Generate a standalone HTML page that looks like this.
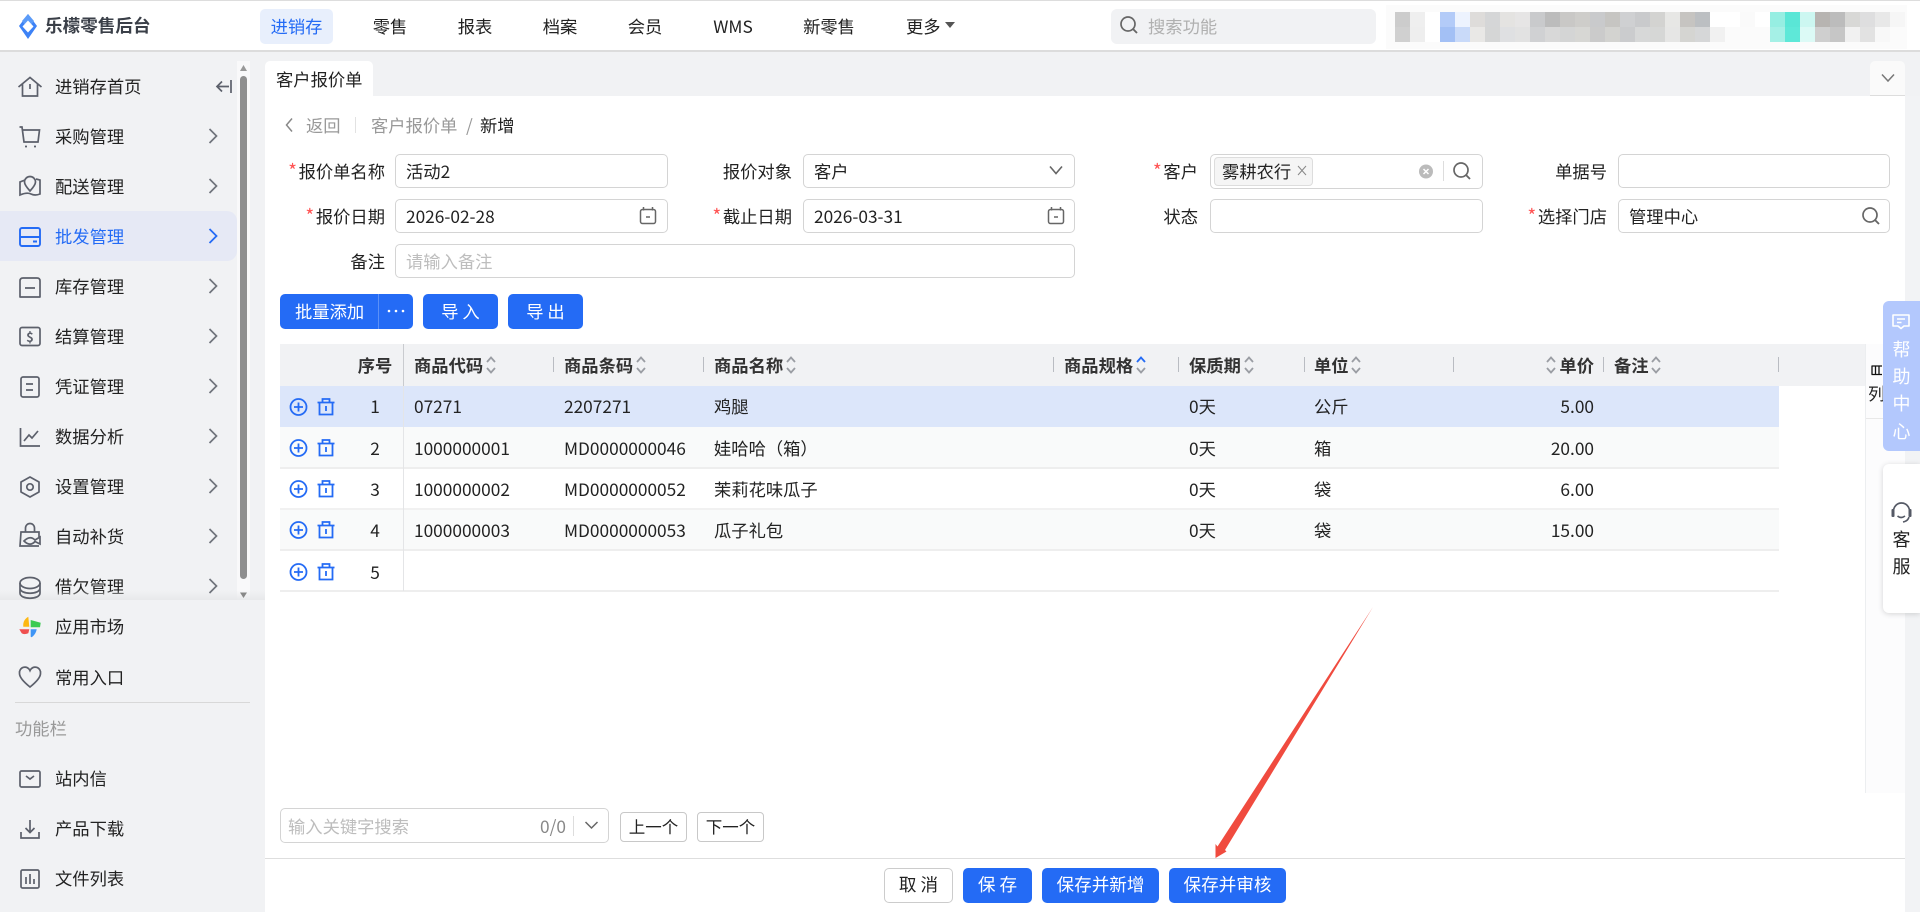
<!DOCTYPE html>
<html lang="zh-CN"><head><meta charset="utf-8"><title>客户报价单</title>
<style>
html,body{margin:0;padding:0;width:1920px;height:912px;overflow:hidden;background:#f1f2f4}
body{font-family:"Noto Sans CJK SC","Liberation Sans",sans-serif;font-size:17.3px;color:#222;position:relative}
.b,.t{position:absolute;box-sizing:border-box}
.t{white-space:nowrap;line-height:24px;height:24px}
.r{text-align:right}
.c{text-align:center}
.in{position:absolute;box-sizing:border-box;height:34px;background:#fff;border:1.5px solid #d4d4d4;border-radius:5px}
.btn{position:absolute;box-sizing:border-box;height:35px;line-height:34px;background:#246bf5;color:#fff;border-radius:5px;text-align:center;white-space:nowrap}
.h{font-weight:700;color:#333}
.g{color:#999}
.ph{color:#bdbdbd}
.red{color:#f55;display:inline-block;width:10.5px;text-align:left;font-size:19px;line-height:20px}
.dv{position:absolute;width:1px;height:15px;top:357px;background:#b9bcc2}
.row{position:absolute;left:280px;width:1499px;height:42px}
.hp{font-size:18px}
</style></head><body>
<!-- top bar -->
<div class="b" style="left:0;top:0;width:1920px;height:52px;background:#fff;border-top:1px solid #ddd;border-bottom:2px solid #dcdcdc"></div>
<div class="t" style="left:45px;top:14px;font-weight:700;font-size:17.6px;color:#3a3f48">乐檬零售后台</div>
<div class="b" style="left:260px;top:9px;width:73px;height:35px;background:#e8effc;border-radius:5px"></div>
<div class="t c" style="left:260px;top:14px;width:73px;color:#246bf5">进销存</div>
<div class="t c" style="left:350px;top:14px;width:80px">零售</div>
<div class="t c" style="left:435px;top:14px;width:80px">报表</div>
<div class="t c" style="left:520px;top:14px;width:80px">档案</div>
<div class="t c" style="left:605px;top:14px;width:80px">会员</div>
<div class="t c" style="left:693px;top:14px;width:80px">WMS</div>
<div class="t c" style="left:789px;top:14px;width:80px">新零售</div>
<div class="t" style="left:906px;top:14px">更多</div>
<div class="b" style="left:1111px;top:9px;width:265px;height:35px;background:#f1f2f4;border-radius:6px"></div>
<div class="t ph" style="left:1148px;top:14px;color:#b0b0b0">搜索功能</div>
<svg class="b" style="left:1386px;top:4px" width="521" height="46" viewBox="1386 4 521 46" shape-rendering="crispEdges">
<rect x="1386" y="5" width="521" height="44" fill="#fbfbfb"/>
<g id="m">
<rect x="1395" y="12" width="15" height="15" fill="#ccc"/><rect x="1410" y="12" width="15" height="15" fill="#efefef"/><rect x="1425" y="12" width="15" height="15" fill="#fff"/><rect x="1440" y="12" width="15" height="15" fill="#b3cbf8"/><rect x="1455" y="12" width="15" height="15" fill="#edf3fe"/><rect x="1470" y="12" width="15" height="15" fill="#dedcda"/><rect x="1485" y="12" width="15" height="15" fill="#d5d6d7"/><rect x="1500" y="12" width="15" height="15" fill="#e4e3e1"/><rect x="1515" y="12" width="15" height="15" fill="#e6e5e5"/><rect x="1530" y="12" width="15" height="15" fill="#c9cacc"/><rect x="1545" y="12" width="15" height="15" fill="#bcbcbc"/><rect x="1560" y="12" width="15" height="15" fill="#c9c8c6"/><rect x="1575" y="12" width="15" height="15" fill="#cecdca"/><rect x="1590" y="12" width="15" height="15" fill="#c9cacc"/><rect x="1605" y="12" width="15" height="15" fill="#c6c5c2"/><rect x="1620" y="12" width="15" height="15" fill="#cfd0d2"/><rect x="1635" y="12" width="15" height="15" fill="#c9cacc"/><rect x="1650" y="12" width="15" height="15" fill="#d3d3d1"/><rect x="1665" y="12" width="15" height="15" fill="#e7e7e5"/><rect x="1680" y="12" width="15" height="15" fill="#c6c4c1"/><rect x="1695" y="12" width="15" height="15" fill="#bcbfc2"/><rect x="1710" y="12" width="30" height="15" fill="#fff"/><rect x="1740" y="12" width="15" height="15" fill="#fafafa"/><rect x="1755" y="12" width="15" height="15" fill="#fff"/>
<rect x="1770" y="12" width="15" height="15" fill="#96eee2"/><rect x="1785" y="12" width="15" height="15" fill="#5ae6d6"/><rect x="1800" y="12" width="15" height="15" fill="#ccf7f1"/><rect x="1815" y="12" width="15" height="15" fill="#b7b4b1"/><rect x="1830" y="12" width="15" height="15" fill="#bcbcbc"/><rect x="1845" y="12" width="15" height="15" fill="#d8d8d6"/><rect x="1860" y="12" width="15" height="15" fill="#dededf"/><rect x="1875" y="12" width="15" height="15" fill="#e8e8e8"/><rect x="1890" y="12" width="15" height="15" fill="#f6f6f6"/>
<rect x="1395" y="27" width="15" height="15" fill="#d0d0d0"/><rect x="1410" y="27" width="15" height="15" fill="#eee"/><rect x="1425" y="27" width="15" height="15" fill="#fff"/><rect x="1440" y="27" width="15" height="15" fill="#a3c0f5"/><rect x="1455" y="27" width="15" height="15" fill="#c9daf9"/><rect x="1470" y="27" width="15" height="15" fill="#e9e8e6"/><rect x="1485" y="27" width="15" height="15" fill="#d5d6d6"/><rect x="1500" y="27" width="15" height="15" fill="#dfe0e2"/><rect x="1515" y="27" width="15" height="15" fill="#e2e2e2"/><rect x="1530" y="27" width="15" height="15" fill="#d0d1d3"/><rect x="1545" y="27" width="15" height="15" fill="#d8d8d8"/><rect x="1560" y="27" width="15" height="15" fill="#d4d5d5"/><rect x="1575" y="27" width="15" height="15" fill="#d7d7d4"/><rect x="1590" y="27" width="15" height="15" fill="#cbcbcb"/><rect x="1605" y="27" width="15" height="15" fill="#d3d3d0"/><rect x="1620" y="27" width="15" height="15" fill="#cbccce"/><rect x="1635" y="27" width="15" height="15" fill="#d7d8d8"/><rect x="1650" y="27" width="15" height="15" fill="#d6d7d6"/><rect x="1665" y="27" width="15" height="15" fill="#e6e6e5"/><rect x="1680" y="27" width="15" height="15" fill="#d5d5d2"/><rect x="1695" y="27" width="15" height="15" fill="#d6d7d8"/><rect x="1710" y="27" width="15" height="15" fill="#f1f1f1"/>
<rect x="1770" y="27" width="15" height="15" fill="#a5f0e6"/><rect x="1785" y="27" width="15" height="15" fill="#5ee8d8"/><rect x="1800" y="27" width="15" height="15" fill="#dcfaf6"/><rect x="1815" y="27" width="15" height="15" fill="#cfcfcf"/><rect x="1830" y="27" width="15" height="15" fill="#c6c6c6"/><rect x="1845" y="27" width="15" height="15" fill="#f1f1f1"/><rect x="1860" y="27" width="15" height="15" fill="#e2e2e2"/><rect x="1875" y="27" width="15" height="15" fill="#f8f8f8"/>
</g></svg>

<!-- sidebar -->
<div class="b" style="left:237px;top:61px;width:13px;height:539px;background:#f9f9fa"></div>
<div class="b" style="left:240px;top:76px;width:7px;height:503px;background:#8f8f8f;border-radius:4px"></div>
<div class="b" style="left:0;top:211px;width:237px;height:50px;background:#e6e9f5;border-radius:0 10px 10px 0"></div>
<div class="t" style="left:55px;top:74px">进销存首页</div>
<div class="t" style="left:55px;top:124px">采购管理</div>
<div class="t" style="left:55px;top:174px">配送管理</div>
<div class="t" style="left:55px;top:224px;color:#246bf5">批发管理</div>
<div class="t" style="left:55px;top:274px">库存管理</div>
<div class="t" style="left:55px;top:324px">结算管理</div>
<div class="t" style="left:55px;top:374px">凭证管理</div>
<div class="t" style="left:55px;top:424px">数据分析</div>
<div class="t" style="left:55px;top:474px">设置管理</div>
<div class="t" style="left:55px;top:524px">自动补货</div>
<div class="t" style="left:55px;top:574px">借欠管理</div>
<div class="b" style="left:0;top:590px;width:265px;height:10px;background:linear-gradient(rgba(230,231,233,0),#e8e9eb)"></div>
<div class="b" style="left:0;top:600px;width:265px;height:312px;background:#f1f2f4"></div>
<div class="t" style="left:55px;top:614px">应用市场</div>
<div class="t" style="left:55px;top:665px">常用入口</div>
<div class="b" style="left:15px;top:702px;width:235px;height:1px;background:#d8d8d8"></div>
<div class="t" style="left:15px;top:716px;color:#999">功能栏</div>
<div class="t" style="left:55px;top:766px">站内信</div>
<div class="t" style="left:55px;top:816px">产品下载</div>
<div class="t" style="left:55px;top:866px">文件列表</div>

<!-- content -->
<div class="b" style="left:265px;top:96px;width:1640px;height:816px;background:#fff"></div>
<div class="b" style="left:265px;top:61px;width:108px;height:36px;background:#fff;border-radius:5px 5px 0 0"></div>
<div class="t" style="left:276px;top:67px">客户报价单</div>
<div class="b" style="left:1870px;top:61px;width:35px;height:35px;background:#fafafa;border-radius:5px 5px 0 0;border-bottom:1px solid #ddd"></div>

<div class="t g" style="left:306px;top:113px">返回</div>
<div class="b" style="left:355px;top:117px;width:1px;height:16px;background:#e2e2e2"></div>
<div class="t g" style="left:371px;top:113px">客户报价单</div>
<div class="t g" style="left:466px;top:113px">/</div>
<div class="t" style="left:480px;top:113px">新增</div>

<!-- form -->
<div class="t r" style="left:225px;width:160px;top:159px"><span class="red">*</span>报价单名称</div>
<div class="in" style="left:395px;top:154px;width:273px"></div>
<div class="t" style="left:406px;top:159px">活动2</div>
<div class="t r" style="left:632px;width:160px;top:159px">报价对象</div>
<div class="in" style="left:803px;top:154px;width:272px"></div>
<div class="t" style="left:814px;top:159px">客户</div>
<div class="t r" style="left:1038px;width:160px;top:159px"><span class="red">*</span>客户</div>
<div class="in" style="left:1210px;top:154px;width:273px;height:35px"></div>
<div class="b" style="left:1214px;top:157px;width:99px;height:29px;background:#f5f5f5;border:1px solid #ddd;border-radius:4px"></div>
<div class="t" style="left:1222px;top:159px">雾耕农行</div>
<div class="t r" style="left:1447px;width:160px;top:159px">单据号</div>
<div class="in" style="left:1618px;top:154px;width:272px"></div>

<div class="t r" style="left:225px;width:160px;top:204px"><span class="red">*</span>报价日期</div>
<div class="in" style="left:395px;top:199px;width:273px"></div>
<div class="t" style="left:406px;top:204px">2026-02-28</div>
<div class="t r" style="left:632px;width:160px;top:204px"><span class="red">*</span>截止日期</div>
<div class="in" style="left:803px;top:199px;width:272px"></div>
<div class="t" style="left:814px;top:204px">2026-03-31</div>
<div class="t r" style="left:1038px;width:160px;top:204px">状态</div>
<div class="in" style="left:1210px;top:199px;width:273px"></div>
<div class="t r" style="left:1447px;width:160px;top:204px"><span class="red">*</span>选择门店</div>
<div class="in" style="left:1618px;top:199px;width:272px"></div>
<div class="t" style="left:1629px;top:204px">管理中心</div>

<div class="t r" style="left:225px;width:160px;top:249px">备注</div>
<div class="in" style="left:395px;top:244px;width:680px"></div>
<div class="t ph" style="left:406px;top:249px">请输入备注</div>

<!-- toolbar -->
<div class="btn" style="left:280px;top:294px;width:133px;text-align:left;padding-left:15px">批量添加</div>
<div class="b" style="left:378px;top:294px;width:1px;height:35px;background:#5b90f7"></div>
<div class="btn" style="left:423px;top:294px;width:75px">导 入</div>
<div class="btn" style="left:508px;top:294px;width:75px">导 出</div>

<!-- table -->
<div class="b" style="left:280px;top:344px;width:1585px;height:42px;background:#f1f2f4"></div>
<div class="row" style="top:386px;height:41px;background:#dce6fa"></div>
<div class="row" style="top:427px;background:#f9fafa;border-bottom:2px solid #eeeeee;box-sizing:border-box"></div>
<div class="row" style="top:469px;height:41px;background:#fff;border-bottom:2px solid #f1f1f1;box-sizing:border-box"></div>
<div class="row" style="top:510px;height:41px;background:#f9fafa;border-bottom:2px solid #eeeeee;box-sizing:border-box"></div>
<div class="row" style="top:551px;height:41px;background:#fff;border-bottom:2px solid #eeeeee;box-sizing:border-box"></div>
<div class="b" style="left:403px;top:344px;width:1px;height:247px;background:#e4e5e7"></div>
<div class="b" style="left:403px;top:344px;width:1px;height:42px;background:#c9cbcf"></div>
<div class="dv" style="left:553px"></div><div class="dv" style="left:703px"></div><div class="dv" style="left:1053px"></div><div class="dv" style="left:1178px"></div><div class="dv" style="left:1304px"></div><div class="dv" style="left:1453px"></div><div class="dv" style="left:1603px"></div><div class="dv" style="left:1778px"></div>

<div class="t h c" style="left:345px;width:60px;top:353px">序号</div>
<div class="t h" style="left:414px;top:353px">商品代码</div>
<div class="t h" style="left:564px;top:353px">商品条码</div>
<div class="t h" style="left:714px;top:353px">商品名称</div>
<div class="t h" style="left:1064px;top:353px">商品规格</div>
<div class="t h" style="left:1189px;top:353px">保质期</div>
<div class="t h" style="left:1314px;top:353px">单位</div>
<div class="t h r" style="left:1494px;width:100px;top:353px">单价</div>
<div class="t h" style="left:1614px;top:353px">备注</div>

<div class="t c" style="left:345px;width:60px;top:394px">1</div>
<div class="t" style="left:414px;top:394px">07271</div>
<div class="t" style="left:564px;top:394px">2207271</div>
<div class="t" style="left:714px;top:394px">鸡腿</div>
<div class="t" style="left:1189px;top:394px">0天</div>
<div class="t" style="left:1314px;top:394px">公斤</div>
<div class="t r" style="left:1494px;width:100px;top:394px">5.00</div>

<div class="t c" style="left:345px;width:60px;top:436px">2</div>
<div class="t" style="left:414px;top:436px">1000000001</div>
<div class="t" style="left:564px;top:436px">MD0000000046</div>
<div class="t" style="left:714px;top:436px">娃哈哈（箱）</div>
<div class="t" style="left:1189px;top:436px">0天</div>
<div class="t" style="left:1314px;top:436px">箱</div>
<div class="t r" style="left:1494px;width:100px;top:436px">20.00</div>

<div class="t c" style="left:345px;width:60px;top:477px">3</div>
<div class="t" style="left:414px;top:477px">1000000002</div>
<div class="t" style="left:564px;top:477px">MD0000000052</div>
<div class="t" style="left:714px;top:477px">茉莉花味瓜子</div>
<div class="t" style="left:1189px;top:477px">0天</div>
<div class="t" style="left:1314px;top:477px">袋</div>
<div class="t r" style="left:1494px;width:100px;top:477px">6.00</div>

<div class="t c" style="left:345px;width:60px;top:518px">4</div>
<div class="t" style="left:414px;top:518px">1000000003</div>
<div class="t" style="left:564px;top:518px">MD0000000053</div>
<div class="t" style="left:714px;top:518px">瓜子礼包</div>
<div class="t" style="left:1189px;top:518px">0天</div>
<div class="t" style="left:1314px;top:518px">袋</div>
<div class="t r" style="left:1494px;width:100px;top:518px">15.00</div>

<div class="t c" style="left:345px;width:60px;top:560px">5</div>

<!-- column setting strip -->
<div class="b" style="left:1865px;top:344px;width:40px;height:449px;background:#fcfcfd;border-left:1px solid #eceef0"></div>
<div class="b" style="left:1866px;top:418px;width:39px;height:1px;background:#e8e8e8"></div>
<div class="t" style="left:1868px;top:381px">列</div>
<div class="b" style="left:1905px;top:96px;width:15px;height:816px;background:#f2f3f5"></div>

<!-- help -->
<div class="b" style="left:1883px;top:301px;width:37px;height:150px;background:#b3c8fd;border-radius:6px 0 0 6px"></div>
<div class="t c hp" style="left:1883px;width:37px;top:337px;color:#fff">帮</div>
<div class="t c hp" style="left:1883px;width:37px;top:364px;color:#fff">助</div>
<div class="t c hp" style="left:1883px;width:37px;top:391px;color:#fff">中</div>
<div class="t c hp" style="left:1883px;width:37px;top:419px;color:#fff">心</div>
<div class="b" style="left:1883px;top:464px;width:37px;height:149px;background:#fff;border-radius:6px 0 0 6px;box-shadow:0 1px 6px rgba(0,0,0,.16)"></div>
<div class="t c hp" style="left:1883px;width:37px;top:527px">客</div>
<div class="t c hp" style="left:1883px;width:37px;top:554px">服</div>

<!-- bottom search -->
<div class="in" style="left:280px;top:808px;width:329px;height:35px"></div>
<div class="t ph" style="left:288px;top:814px">输入关键字搜索</div>
<div class="t" style="left:540px;top:814px;color:#888">0/0</div>
<div class="b" style="left:573px;top:816px;width:1px;height:20px;background:#ddd"></div>
<div class="b c" style="left:620px;top:812px;width:67px;height:30px;border:1.5px solid #c8c8c8;border-radius:4px;line-height:27px;font-size:16.5px">上一个</div>
<div class="b c" style="left:697px;top:812px;width:67px;height:30px;border:1.5px solid #c8c8c8;border-radius:4px;line-height:27px;font-size:16.5px">下一个</div>

<!-- footer -->
<div class="b" style="left:265px;top:858px;width:1640px;height:1px;background:#dedede"></div>
<div class="btn" style="left:884px;top:868px;width:69px;background:#fff;color:#222;border:1.5px solid #ccc;line-height:32px;font-size:17.6px">取 消</div>
<div class="btn" style="left:963px;top:868px;width:69px;font-size:17.6px">保 存</div>
<div class="btn" style="left:1042px;top:868px;width:117px;font-size:17.6px">保存并新增</div>
<div class="btn" style="left:1169px;top:868px;width:117px;font-size:17.6px">保存并审核</div>

<!-- icons overlay -->
<svg class="b" style="left:0;top:0" width="1920" height="912" viewBox="0 0 1920 912" fill="none">
<defs>
<g id="ch"><path d="M-3.5 -7L3.5 0L-3.5 7" stroke="#70747c" stroke-width="1.7"/></g>
<g id="so"><path d="M-4 -3L0 -7.5L4 -3" stroke="#9a9da3" stroke-width="1.8"/><path d="M-4 3L0 7.5L4 3" stroke="#9a9da3" stroke-width="1.8"/></g>
<g id="ac" stroke="#246bf5" stroke-width="1.8"><circle cx="298.5" cy="0" r="8"/><path d="M294 0H303M298.5 -4.5V4.5"/><path d="M317.5 -4.5H334.5M322.5 -4.5V-8H329.5V-4.5M319.5 -4.5V7.5H332.5V-4.5M326 -1V4"/></g>
<g id="mag"><circle cx="-1" cy="-1" r="7" stroke="#666" stroke-width="1.7"/><path d="M4 4L8 8" stroke="#666" stroke-width="1.9"/></g>
<g id="cal" stroke="#666" stroke-width="1.5"><rect x="-7.5" y="-6.5" width="15" height="14" rx="2"/><path d="M-4.5 -9V-5.5M4.5 -9V-5.5M-2 1H2"/></g>
</defs>

<!-- logo -->
<path d="M28 14L37 26L28 39L19 26Z" fill="#3d82f6"/>
<path d="M28 14L34 21L28 29L22 21Z" fill="#5b9bf8"/>
<path d="M28 20.5L33.5 26.5L28 32.5L22.5 26.5Z" fill="#fff"/>
<!-- more caret, search -->
<path d="M945 22H955L950 28Z" fill="#555"/>
<g transform="translate(1129,25)"><use href="#mag"/></g>

<!-- sidebar icons -->
<g stroke="#5c606b" stroke-width="1.7">
<path d="M18.5 87L30 77.5L41.5 87M22.5 84V96H37.5V84M30 84V89"/>
<path d="M19.5 127H22L24 142H38L39.5 130H23"/><path d="M25 146.5h2M34 146.5h2"/>
<path d="M25 180L20 182V195Q27 192 31 194Q35 196 40 194V180L36 179M30 176.5A5.5 5.5 0 0 1 35.5 182Q35.5 185 30 191Q24.5 185 24.5 182A5.5 5.5 0 0 1 30 176.5Z"/>
<path d="M23 278H37Q40 278 40 281V297H20V281Q20 278 23 278ZM25 288H35" stroke-linejoin="round"/>
<rect x="20" y="327.5" width="20" height="18" rx="2"/>
<rect x="21" y="377" width="18" height="20" rx="2"/><path d="M26 384H33M26 390H33"/>
<path d="M20.5 428V446H40M24 441L29 435L32 438L38 431"/>
<path d="M30 477L39 482V492L30 497L21 492V482Z" stroke-linejoin="round"/><circle cx="30" cy="487" r="3.2"/>
<path d="M39 537V532H21L20 546H39M25.5 532V528A4.5 4.5 0 0 1 34.5 528V532M24 541Q30 535 35 540L40 537V544L35 541.5Q30 547 24 541Z"/>
<ellipse cx="30" cy="583" rx="10" ry="5.5"/><path d="M20 583V593C20 600 40 600 40 593V583M20 588C20 595 40 595 40 588"/>
<path d="M30 687C25 683 19.5 678 19.5 673.5A5.5 5.5 0 0 1 30 670.5A5.5 5.5 0 0 1 40.5 673.5C40.5 678 35 683 30 687Z"/>
<rect x="20" y="771" width="20" height="16" rx="1.5"/><path d="M26 776L30 779L34 776"/>
<path d="M30 820V832M25.5 828L30 832.5L34.5 828M21 832V838H39V832"/>
<rect x="21" y="870" width="18" height="18" rx="1.5"/><path d="M26 877V884M30 874V884M34 879V884"/>
<!-- collapse -->
<path d="M231 80V93M217 86.5H229M222 81.5L217 86.5L222 91.5"/>
</g>
<text x="30" y="342" font-family="Noto Sans CJK SC,sans-serif" font-size="13" font-weight="700" fill="#5c606b" text-anchor="middle">$</text>
<!-- active wholesale -->
<g stroke="#246bf5" stroke-width="1.9"><rect x="20" y="228" width="20" height="18" rx="2"/><path d="M20 237H40M33 241.5H37"/></g>
<!-- app market -->
<path d="M28.3 616.7Q22.5 620 23.3 626.7L29.3 626.7Z" fill="#fdb813"/>
<path d="M30.7 620L40.7 622.7L40 627.3H30.7Z" fill="#3ccb52"/>
<path d="M30.7 629.3H36.7Q36 634 31.7 637.3L30.7 636.7Z" fill="#3f95f5"/>
<path d="M19.3 629.3H29.3L28.3 633.3Q24 635 21.7 633.3Z" fill="#ef4f4f"/>
<!-- sidebar chevrons -->
<use href="#ch" x="213" y="136"/><use href="#ch" x="213" y="186"/>
<g transform="translate(213,236)"><path d="M-3.5 -7L3.5 0L-3.5 7" stroke="#246bf5" stroke-width="1.8"/></g>
<use href="#ch" x="213" y="286"/><use href="#ch" x="213" y="336"/><use href="#ch" x="213" y="386"/><use href="#ch" x="213" y="436"/><use href="#ch" x="213" y="486"/><use href="#ch" x="213" y="536"/><use href="#ch" x="213" y="586"/>
<!-- scrollbar arrows -->
<path d="M243.5 65L240 71H247Z" fill="#999"/><path d="M243.5 598L240 592.5H247Z" fill="#888"/>

<!-- tab dropdown -->
<path d="M1882 74.5L1888 81L1894 74.5" stroke="#777" stroke-width="1.5"/>
<!-- breadcrumb back -->
<path d="M292 118.5L286.5 125L292 131.5" stroke="#888" stroke-width="1.5"/>

<!-- form icons -->
<g transform="translate(1056,170.5)"><path d="M-6 -4L0 3L6 -4" stroke="#666" stroke-width="1.6"/></g>
<use href="#cal" x="648" y="216"/>
<use href="#cal" x="1056" y="216"/>
<path d="M1298 166L1306 175M1306 166L1298 175" stroke="#888" stroke-width="1"/>
<circle cx="1426" cy="171.5" r="7" fill="#bbb"/><path d="M1423.5 169L1428.5 174M1428.5 169L1423.5 174" stroke="#fff" stroke-width="1.5"/>
<path d="M1443.5 161V181" stroke="#ddd"/>
<use href="#mag" x="1462" y="171"/>
<use href="#mag" x="1871" y="216"/>

<!-- toolbar dots -->
<g fill="#fff"><circle cx="389" cy="311" r="1.3"/><circle cx="396" cy="311" r="1.3"/><circle cx="403" cy="311" r="1.3"/></g>

<!-- sort icons -->
<use href="#so" x="491" y="365"/><use href="#so" x="641" y="365"/><use href="#so" x="791" y="365"/>
<g transform="translate(1141,365)"><path d="M-4 -3L0 -7.5L4 -3" stroke="#246bf5" stroke-width="1.9"/><path d="M-4 3L0 7.5L4 3" stroke="#9a9da3" stroke-width="1.8"/></g>
<use href="#so" x="1249" y="365"/><use href="#so" x="1356" y="365"/><use href="#so" x="1551" y="365"/><use href="#so" x="1656" y="365"/>

<!-- row actions -->
<use href="#ac" y="407"/><use href="#ac" y="448"/><use href="#ac" y="489"/><use href="#ac" y="530"/><use href="#ac" y="572"/>

<!-- column icon -->
<path d="M1871.5 366H1882M1871.5 374.5H1882M1872 366V374.5M1875.5 366V374.5M1879 366V374.5" stroke="#111" stroke-width="1.3"/>
<!-- help icon -->
<path d="M1893 315H1909V326H1904L1901 328.5L1898 326H1893ZM1897 319H1905M1897 322.5H1901.5" stroke="#fff" stroke-width="1.6" stroke-linejoin="round"/>
<!-- headset -->
<path d="M1893.5 511A8 8 0 0 1 1909.5 511" stroke="#555a66" stroke-width="1.7"/>
<rect x="1891.5" y="509" width="3" height="8" rx="1" fill="#555a66"/><rect x="1908.5" y="509" width="3" height="8" rx="1" fill="#555a66"/>
<path d="M1909 517Q1908 521 1903 522M1897.5 516Q1901 519 1905 516" stroke="#555a66" stroke-width="1.6"/>

<!-- bottom search chevron -->
<path d="M585.5 822L591.5 828L597.5 822" stroke="#666" stroke-width="1.5"/>

<!-- red arrow -->
<path d="M1373 607L1225 850L1226.5 851.5L1215.5 858L1215.5 844L1217.5 846.5Z" fill="#f04b3f"/>
</svg>
</body></html>
